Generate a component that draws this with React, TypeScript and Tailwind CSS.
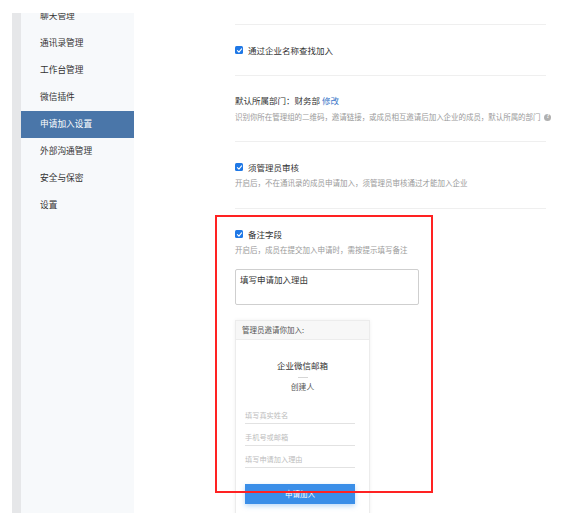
import React from "react";

const NAV = [
  "聊天管理",
  "通讯录管理",
  "工作台管理",
  "微信插件",
  "申请加入设置",
  "外部沟通管理",
  "安全与保密",
  "设置",
];

function Check() {
  return (
    <span className="flex h-[8px] w-[8px] shrink-0 items-center justify-center rounded-[1.5px] bg-[#1f78e6]">
      <svg viewBox="0 0 10 10" className="h-[7px] w-[7px]">
        <path d="M2 5.2 L4.2 7.3 L8 2.8" fill="none" stroke="#fff" strokeWidth="1.6" strokeLinecap="round" strokeLinejoin="round" />
      </svg>
    </span>
  );
}

function CheckRow({ label }: { label: string }) {
  return (
    <div className="flex h-[12px] items-center gap-[5px] text-[8.5px] leading-[12px] text-[#333]">
      <Check />
      <span>{label}</span>
    </div>
  );
}

function Desc({ children }: { children: React.ReactNode }) {
  return (
    <div className="flex h-[12px] items-center gap-[4px] whitespace-nowrap text-[7.5px] leading-[12px] text-[#9a9a9a]">
      {children}
    </div>
  );
}

function Field({ text }: { text: string }) {
  return (
    <div className="flex h-[22px] w-[110px] items-end border-b border-[#e2e2e2] pb-[3px] text-[7.2px] leading-[10px] text-[#bdbdbd]">
      {text}
    </div>
  );
}

export default function App() {
  return (
    <div
      className="relative flex h-[513px] w-[581px] overflow-hidden bg-white"
      style={{ fontFamily: '"Noto Sans CJK SC", "Noto Sans", sans-serif' }}
    >
      <div className="w-[12px] shrink-0" />
      <div className="flex shrink-0 pt-[13px]">
        <div className="w-[9px] bg-[#e6e7e9]" />
        <nav className="w-[113px] overflow-hidden bg-[#f7f9fb]">
          <ul className="-mt-[10.5px]">
            {NAV.map((item) => (
              <li
                key={item}
                className={`flex h-[27px] items-center pl-[19px] text-[8.7px] ${
                  item === "申请加入设置" ? "bg-[#4a76a9] text-white" : "text-[#333]"
                }`}
              >
                {item}
              </li>
            ))}
          </ul>
        </nav>
      </div>

      <main className="ml-[101px] w-[311px] shrink-0">
        <div className="h-[25px] border-b border-[#efefef]" />

        <section className="flex h-[51px] items-center border-b border-[#efefef]">
          <CheckRow label="通过企业名称查找加入" />
        </section>

        <section className="h-[66px] border-b border-[#efefef] pt-[18px]">
          <div className="h-[12px] text-[8.5px] leading-[12px] text-[#333]">
            默认所属部门：财务部 <span className="text-[#3b78c9]">修改</span>
          </div>
          <div className="mt-[5px]">
            <Desc>
              <span className="tracking-[-0.05px]">
                识别你所在管理组的二维码，邀请链接，或成员相互邀请后加入企业的成员，默认所属的部门
              </span>
              <span className="flex h-[7px] w-[7px] shrink-0 items-center justify-center rounded-full bg-[#b0b0b0] text-[5.5px] leading-none font-bold text-white">
                ?
              </span>
            </Desc>
          </div>
        </section>

        <section className="h-[67px] border-b border-[#efefef] pt-[19px]">
          <CheckRow label="须管理员审核" />
          <div className="mt-[4px]">
            <Desc>开启后，不在通讯录的成员申请加入，须管理员审核通过才能加入企业</Desc>
          </div>
        </section>

        <section className="pt-[19px]">
          <CheckRow label="备注字段" />
          <div className="mt-[4px]">
            <Desc>开启后，成员在提交加入申请时，需按提示填写备注</Desc>
          </div>

          <div className="mt-[13px] h-[36px] w-[184px] rounded-[2px] border border-[#cfcfcf] px-[4px] pt-[3px] text-[8.5px] leading-[12px] text-[#333]">
            填写申请加入理由
          </div>

          <div className="mt-[15px] w-[135px] border border-[#ececec] shadow-[0_0_4px_rgba(0,0,0,0.06)]">
            <div className="flex h-[19px] items-center border-b border-[#ececec] bg-[#f7f7f7] px-[6px] text-[7.5px] text-[#555]">
              管理员邀请你加入:
            </div>
            <div className="px-[9px] pb-[20px]">
              <div className="pt-[19px] text-center text-[8.5px] leading-[12px] text-[#333]">企业微信邮箱</div>
              <div className="mx-auto mt-[6px] h-px w-[10px] bg-[#d6d6d6]" />
              <div className="mt-[3px] text-center text-[7.8px] leading-[12px] text-[#555]">创建人</div>
              <div className="mt-[9px]">
                <Field text="填写真实姓名" />
                <Field text="手机号或邮箱" />
                <Field text="填写申请加入理由" />
              </div>
              <div className="mt-[16px] flex h-[20px] w-[110px] items-center justify-center bg-[#3a8ee8] text-[7.5px] text-white shadow-[0_2px_5px_rgba(58,142,232,0.35)]">
                申请加入
              </div>
            </div>
          </div>
        </section>
      </main>

      <div className="absolute left-[215px] top-[215px] h-[278px] w-[218px] border-2 border-[#ff2222]" />
    </div>
  );
}
